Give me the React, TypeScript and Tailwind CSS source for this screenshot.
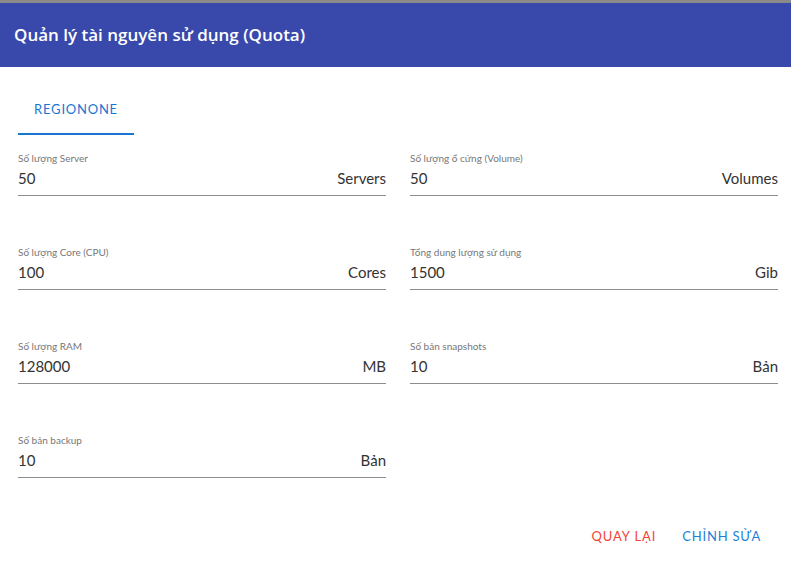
import React from "react";

const fields = [
  { label: "Số lượng Server", value: "50", unit: "Servers" },
  { label: "Số lượng ổ cứng (Volume)", value: "50", unit: "Volumes" },
  { label: "Số lượng Core (CPU)", value: "100", unit: "Cores" },
  { label: "Tổng dung lượng sử dụng", value: "1500", unit: "Gib" },
  { label: "Số lượng RAM", value: "128000", unit: "MB" },
  { label: "Số bản snapshots", value: "10", unit: "Bản" },
  { label: "Số bản backup", value: "10", unit: "Bản" },
];

const QuotaField = ({ label, value, unit }: { label: string; value: string; unit: string }) => (
  <div className="flex flex-col">
    <div className="text-[10px] leading-[12px] text-[#777]">{label}</div>
    <div className="flex items-center justify-between h-[20px] mt-[4px] text-[15px] text-[#333]">
      <span>{value}</span>
      <span>{unit}</span>
    </div>
    <div className="mt-[7px] h-px bg-[#8d8d8d]" />
  </div>
);

export default function App() {
  return (
    <div className="w-[791px] h-[577px] bg-white overflow-hidden" style={{ fontFamily: "Lato, 'Noto Sans', sans-serif" }}>
      <div className="h-[3px] bg-[#8a8a8a]" />
      <div className="h-[64px] bg-[#3949ab] flex items-center px-[14px]">
        <h1 className="text-white text-[17px] font-semibold font-['Open_Sans',sans-serif]">Quản lý tài nguyên sử dụng (Quota)</h1>
      </div>

      <div className="pl-[18px] pr-[13px]">
        <div className="flex mt-[20px]">
          <div className="h-[48px] w-[116px] flex items-center justify-center border-b-2 border-[#1976d2] text-[#1976d2] text-[13px] tracking-[0.06em]">
            REGIONONE
          </div>
        </div>

        <div className="grid grid-cols-2 gap-x-[24px] gap-y-[50px] mt-[17px]">
          {fields.map((f) => (
            <QuotaField key={f.label} {...f} />
          ))}
        </div>

        <div className="flex justify-end gap-[10px] mt-[41px] pr-[9px]">
          <button className="h-[36px] px-[8px] text-[13px] tracking-[0.07em] text-[#f44336]">QUAY LẠI</button>
          <button className="h-[36px] px-[8px] text-[13px] tracking-[0.06em] text-[#1e7fd8]">CHỈNH SỬA</button>
        </div>
      </div>
    </div>
  );
}
